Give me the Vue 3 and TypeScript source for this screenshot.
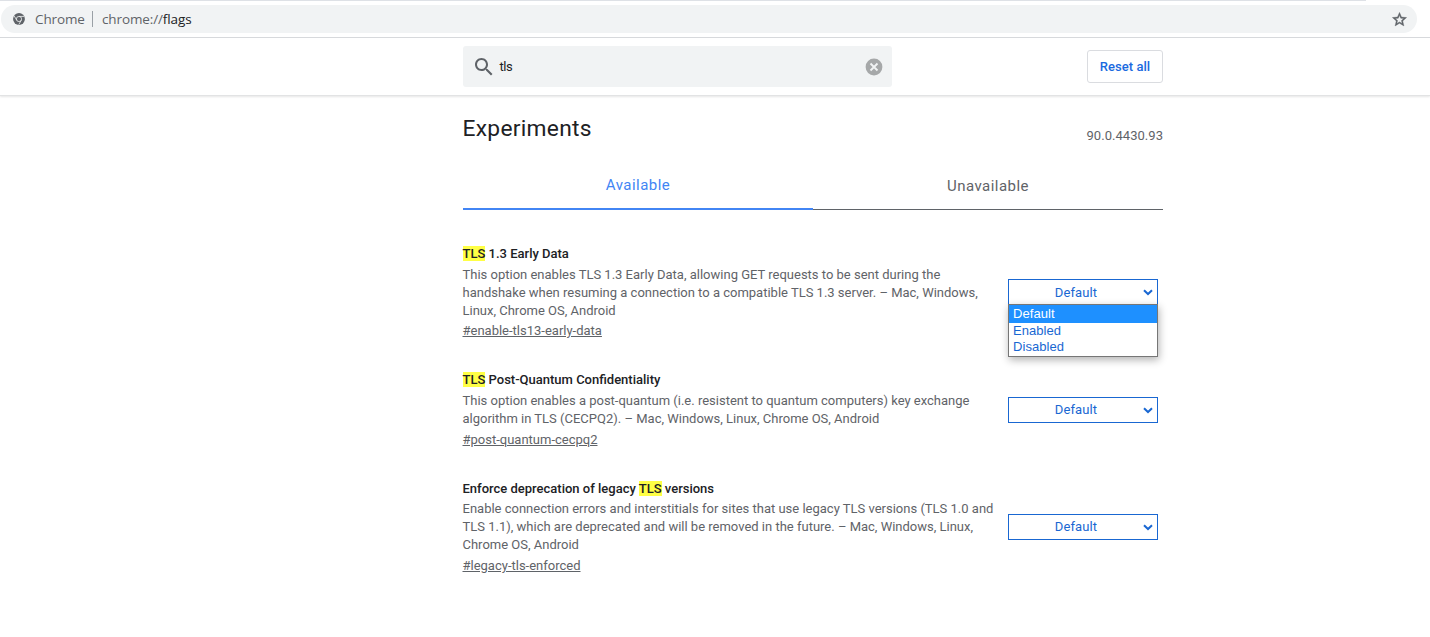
<script setup lang="ts">
import { ref } from 'vue'

interface TitlePart {
  text: string
  hit?: boolean
}

interface Experiment {
  id: string
  title: TitlePart[]
  lines: string[]
  open?: boolean
}

const query = ref('tls')
const options: string[] = ['Default', 'Enabled', 'Disabled']

const experiments: Experiment[] = [
  {
    id: 'enable-tls13-early-data',
    title: [{ text: 'TLS', hit: true }, { text: ' 1.3 Early Data' }],
    lines: [
      'This option enables TLS 1.3 Early Data, allowing GET requests to be sent during the',
      'handshake when resuming a connection to a compatible TLS 1.3 server. – Mac, Windows,',
      'Linux, Chrome OS, Android',
    ],
    open: true,
  },
  {
    id: 'post-quantum-cecpq2',
    title: [{ text: 'TLS', hit: true }, { text: ' Post-Quantum Confidentiality' }],
    lines: [
      'This option enables a post-quantum (i.e. resistent to quantum computers) key exchange',
      'algorithm in TLS (CECPQ2). – Mac, Windows, Linux, Chrome OS, Android',
    ],
  },
  {
    id: 'legacy-tls-enforced',
    title: [{ text: 'Enforce deprecation of legacy ' }, { text: 'TLS', hit: true }, { text: ' versions' }],
    lines: [
      'Enable connection errors and interstitials for sites that use legacy TLS versions (TLS 1.0 and',
      'TLS 1.1), which are deprecated and will be removed in the future. – Mac, Windows, Linux,',
      'Chrome OS, Android',
    ],
  },
]
</script>

<template>
  <div class="page">
    <div class="toolbar">
      <div class="tab-edge"></div>
      <div class="omnibox">
        <svg class="chrome-icon" width="12" height="12" viewBox="0 0 26 26">
          <circle cx="13" cy="13" r="12.8" fill="#5f6368" />
          <g fill="none" stroke="#f1f3f4" stroke-width="1.7">
            <circle cx="13" cy="13" r="5.6" />
            <path d="M13 7.4H24M8.1 15.8L2.6 6.3M17.9 15.8L12.4 25.3" />
          </g>
        </svg>
        <span class="scheme-name">Chrome</span>
        <span class="divider"></span>
        <span class="url">chrome://<b>flags</b></span>
        <svg class="star" width="17" height="17" viewBox="0 0 24 24">
          <path
            fill="#5f6368"
            stroke="#5f6368"
            stroke-width="0.6"
            d="M22 9.24l-7.19-.62L12 2 9.19 8.63 2 9.24l5.46 4.73L5.82 21 12 17.27 18.18 21l-1.63-7.03L22 9.24zM12 15.4l-3.76 2.27 1-4.28-3.32-2.88 4.38-.38L12 6.1l1.71 4.04 4.38.38-3.32 2.88 1 4.28L12 15.4z"
          />
        </svg>
      </div>
    </div>

    <header class="header">
      <div class="header-inner">
        <div class="search">
          <svg class="magnifier" width="24" height="24" viewBox="0 0 24 24">
            <path
              fill="#5f6368"
              d="M15.5 14h-.79l-.28-.27C15.41 12.59 16 11.11 16 9.5 16 5.91 13.09 3 9.5 3S3 5.91 3 9.5 5.91 16 9.5 16c1.61 0 3.09-.59 4.23-1.57l.27.28v.79l5 4.99L20.49 19l-4.99-5zm-6 0C7.01 14 5 11.99 5 9.5S7.01 5 9.5 5 14 7.01 14 9.5 11.99 14 9.5 14z"
            />
          </svg>
          <span class="query">{{ query }}</span>
          <svg class="clear" width="18" height="18" viewBox="0 0 18 18">
            <circle cx="9" cy="9" r="8.4" fill="#a6a8a9" />
            <path d="M5.5 5.5l7 7M12.5 5.5l-7 7" stroke="#f1f3f4" stroke-width="1.9" />
          </svg>
        </div>
        <button class="reset">Reset all</button>
      </div>
    </header>

    <main class="content">
      <div class="heading">
        <h1>Experiments</h1>
        <span class="version">90.0.4430.93</span>
      </div>
      <nav class="tabs">
        <div class="tab active">Available</div>
        <div class="tab">Unavailable</div>
      </nav>

      <section v-for="exp in experiments" :key="exp.id" class="experiment" :class="exp.id">
        <div class="info">
          <h2><span v-for="(part, i) in exp.title" :key="i" :class="{ hit: part.hit }">{{ part.text }}</span></h2>
          <p><span v-for="line in exp.lines" :key="line" class="line">{{ line }}</span></p>
          <a class="permalink">#{{ exp.id }}</a>
        </div>
        <div class="select">
          <span class="value">Default</span>
          <svg class="chevron" width="10" height="7" viewBox="0 0 10 7">
            <path d="M1 1.2L5 5L9 1.2" fill="none" stroke="#1967d2" stroke-width="2" />
          </svg>
          <div v-if="exp.open" class="popup">
            <div v-for="(opt, i) in options" :key="opt" class="option" :class="{ selected: i === 0 }">{{ opt }}</div>
          </div>
        </div>
      </section>
    </main>
  </div>
</template>

<style>
html,
body {
  margin: 0;
  background: #fff;
  overflow: hidden;
}
</style>

<style scoped>
.page {
  height: 637px;
  box-sizing: border-box;
  background: #fff;
  color: #202124;
  font-family: Roboto, sans-serif;
  font-size: 13px;
  letter-spacing: 0;
  white-space: nowrap;
}
.toolbar {
  height: 38px;
  box-sizing: border-box;
  border-bottom: 1px solid #d8dadd;
}
.tab-edge {
  width: 1366px;
  height: 1px;
  margin-bottom: 4px;
  background: #dee1e6;
}
.omnibox {
  display: flex;
  align-items: center;
  width: 1416px;
  height: 28px;
  margin-left: 1px;
  box-sizing: border-box;
  padding: 0 9.5px 0 12px;
  border-radius: 14px;
  background: #f1f3f4;
  color: #5f6368;
  font-family: 'Open Sans', sans-serif;
  font-size: 13.5px;
  letter-spacing: -0.12px;
}
.scheme-name {
  width: 49px;
  margin-left: 10px;
}
.divider {
  width: 1px;
  height: 16px;
  margin: 0 9px 0 8px;
  background: #9aa0a6;
}
.url b {
  font-weight: 400;
  color: #202124;
}
.star {
  margin-left: auto;
}
.header {
  height: 57px;
  border-bottom: 1px solid #e2e3e4;
  box-shadow: 0 1px 2px rgba(0, 0, 0, 0.1);
}
.header-inner,
.content {
  width: 700px;
  margin-left: 463px;
}
.header-inner {
  display: flex;
  justify-content: space-between;
  align-items: flex-start;
}
.search {
  display: flex;
  align-items: center;
  width: 429px;
  height: 41px;
  margin-top: 8px;
  box-sizing: border-box;
  padding: 0 9px 0 9px;
  border-radius: 3px;
  background: #f1f3f4;
}
.query {
  margin-left: 3.5px;
  letter-spacing: -0.4px;
}
.clear {
  margin-left: auto;
}
.reset {
  width: 76px;
  height: 33px;
  margin-top: 12px;
  padding: 0;
  border: 1px solid #dadce0;
  border-radius: 3px;
  background: #fff;
  color: #1a6ae0;
  font: 500 13px Roboto, sans-serif;
  letter-spacing: 0.03px;
}
.heading {
  display: flex;
  justify-content: space-between;
  height: 66px;
}
h1 {
  margin: 18px 0 0 -0.5px;
  font-size: 22.75px;
  line-height: 30px;
  font-weight: 400;
  letter-spacing: 0.3px;
}
.version {
  margin-top: 31px;
  line-height: 18px;
  color: #5f6368;
  letter-spacing: 0.04px;
}
.tabs {
  display: flex;
  height: 48px;
  margin-bottom: 35px;
}
.tab {
  flex: 1;
  box-sizing: border-box;
  border-bottom: 1px solid #5f6368;
  color: #5f6368;
  font-size: 15px;
  letter-spacing: 0.47px;
  line-height: 48px;
  text-align: center;
}
.tab.active {
  border-bottom: 2px solid #4285f4;
  color: #4285f4;
  line-height: 46px;
}
.experiment {
  display: flex;
  align-items: center;
  justify-content: space-between;
  width: 695px;
  margin-bottom: 31px;
}
h2 {
  margin: 0 0 3px;
  font-size: 13px;
  line-height: 18px;
  font-weight: 500;
  white-space: pre;
}
.hit {
  background: #ffff45;
}
p {
  margin: 0 0 2px;
  color: #5f6368;
  line-height: 18px;
}
.line {
  display: block;
}
.permalink {
  display: block;
  color: #5f6368;
  line-height: 18px;
  text-decoration: underline;
}
.post-quantum-cecpq2 p {
  margin-bottom: 3px;
}
.legacy-tls-enforced h2 {
  margin-bottom: 2px;
}
.legacy-tls-enforced p {
  margin-bottom: 3px;
}
.info {
  width: 535px;
  margin-left: -0.5px;
}
.select {
  position: relative;
  display: flex;
  align-items: center;
  width: 150px;
  height: 26px;
  box-sizing: border-box;
  padding-right: 4px;
  border: 1px solid #1967d2;
  background: #fff;
  color: #1967d2;
}
.enable-tls13-early-data .select,
.legacy-tls-enforced .select {
  margin-bottom: 1px;
}
.value {
  width: 134px;
  padding-bottom: 2px;
  letter-spacing: 0.13px;
  text-align: center;
}
.enable-tls13-early-data .value {
  padding-bottom: 0;
}
.popup {
  position: absolute;
  top: 24px;
  left: -1px;
  width: 150px;
  height: 53px;
  box-sizing: border-box;
  border: 1px solid #767676;
  background: #fff;
  box-shadow: 1px 3px 8px rgba(0, 0, 0, 0.3);
  font-family: 'Liberation Sans', sans-serif;
  letter-spacing: 0.05px;
}
.option {
  height: 16px;
  padding-left: 4px;
  line-height: 16px;
}
.option.selected {
  height: 18px;
  line-height: 18px;
  background: #1e90ff;
  color: #fff;
}
</style>
